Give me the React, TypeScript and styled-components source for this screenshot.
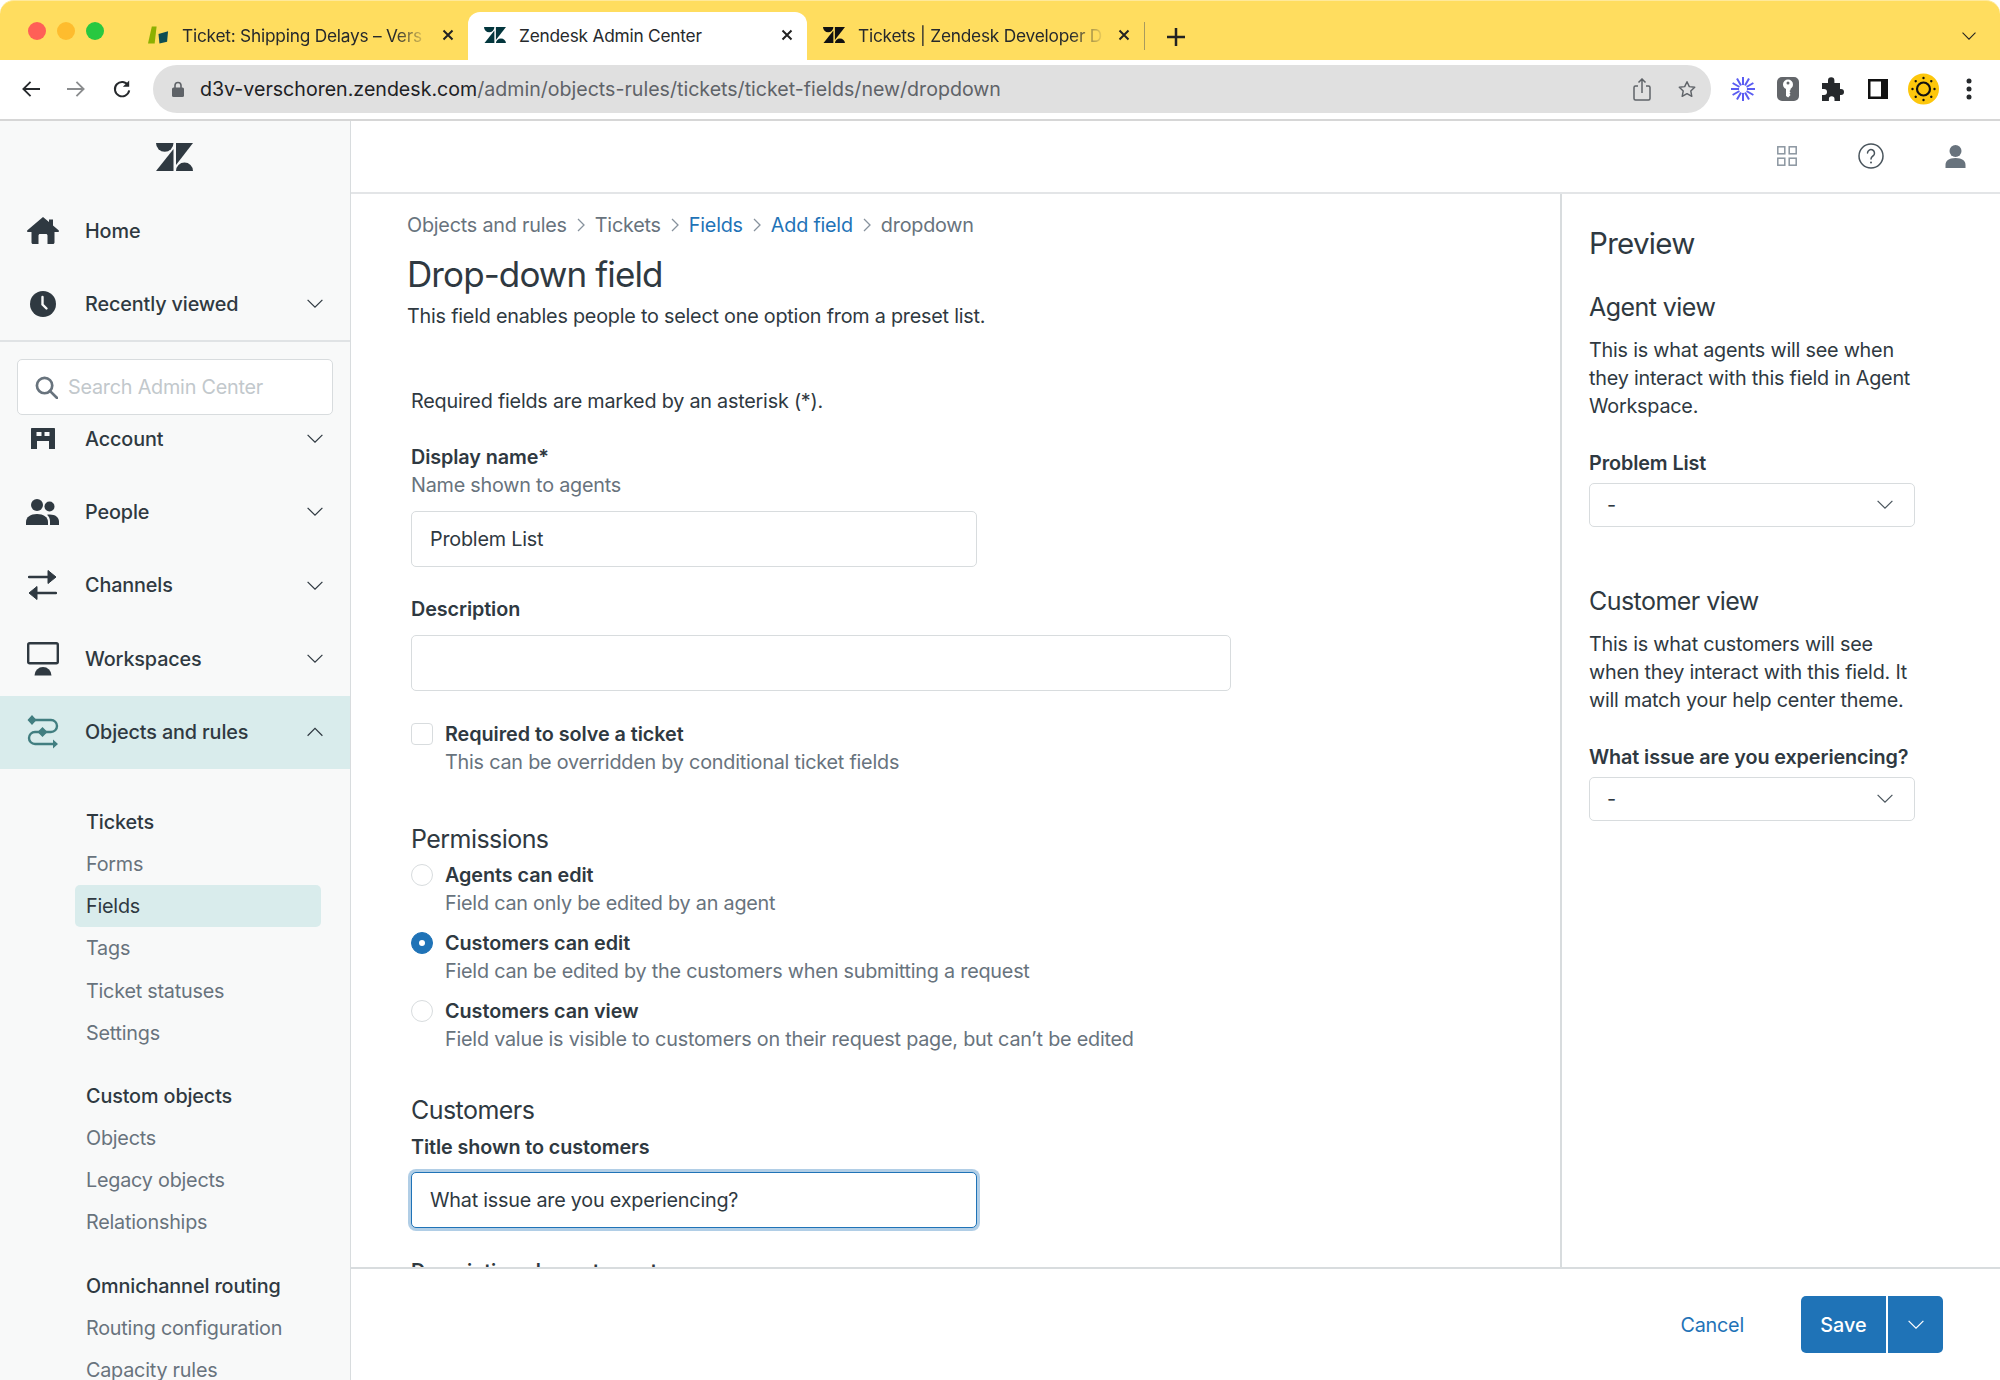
import styled, { createGlobalStyle } from "styled-components";

const GlobalStyle = createGlobalStyle`
  html, body {
    margin: 0;
    padding: 0;
    background: #fff;
  }
  * {
    box-sizing: border-box;
  }
  body {
    font-family: Inter, "Liberation Sans", sans-serif;
    letter-spacing: -0.22px;
    color: #2f3941;
  }
`;

const Page = styled.div`
  width: 2000px;
  height: 1380px;
  display: flex;
  flex-direction: column;
  overflow: hidden;
`;

/* browser chrome */

const TabStrip = styled.div`
  height: 60px;
  flex: none;
  display: flex;
  align-items: flex-end;
  background: #ffdd5f;
  border-top: 1px solid #ffe99a;
  border-radius: 14px 14px 0 0;
  padding-left: 28px;
`;

const TrafficLights = styled.div`
  display: flex;
  gap: 11px;
  width: 120px;
  height: 48px;
  padding-top: 10px;
  flex: none;
`;

const Light = styled.span<{ $color: string }>`
  width: 18px;
  height: 18px;
  border-radius: 50%;
  background: ${({ $color }) => $color};
`;

const Tab = styled.div<{ $active?: boolean; $width: number; $inset: number }>`
  width: ${({ $width }) => $width}px;
  height: 48px;
  flex: none;
  display: flex;
  align-items: center;
  padding: 0 14px 2px ${({ $inset }) => $inset}px;
  gap: 13px;
  border-radius: 12px 12px 0 0;
  background: ${({ $active }) => ($active ? "#fff" : "transparent")};
`;

const TabTitle = styled.span<{ $fade?: boolean }>`
  flex: 1;
  font-size: 17.3px;
  color: #26292c;
  white-space: nowrap;
  overflow: hidden;
  ${({ $fade }) =>
    $fade &&
    `mask-image: linear-gradient(to right, #000 86%, transparent 100%);`}
`;

const TabDivider = styled.span`
  width: 1px;
  height: 28px;
  background: #a89a5e;
  margin: 0 0 10px 0;
  flex: none;
`;

const NewTab = styled.span`
  margin: 0 auto 14px 22px;
  display: flex;
`;

const TabMenu = styled.span`
  margin: 0 24px 20px 0;
  display: flex;
`;

const Toolbar = styled.div`
  height: 61px;
  flex: none;
  display: flex;
  align-items: center;
  padding: 0 0 1px 22px;
  background: #fff;
  border-bottom: 2px solid #d6d6d6;
`;

const ToolButton = styled.span<{ $gap?: number }>`
  width: 18px;
  height: 24px;
  flex: none;
  display: flex;
  align-items: center;
  justify-content: center;
  margin-right: ${({ $gap }) => $gap ?? 0}px;
`;

const UrlBar = styled.div`
  width: 1558px;
  height: 48px;
  flex: none;
  display: flex;
  align-items: center;
  padding: 0 15px 0 19px;
  background: #e0e0e0;
  border-radius: 24px;
  margin-right: 9px;
`;

const UrlText = styled.div`
  flex: 1;
  margin-left: 16px;
  font-size: 19.6px;
  letter-spacing: 0;
  color: #5f6368;
  white-space: nowrap;
`;

const UrlHost = styled.span`
  color: #202124;
`;

const ExtensionTray = styled.div`
  display: flex;
  align-items: center;
`;

const Extension = styled.span`
  width: 45.2px;
  height: 32px;
  display: flex;
  align-items: center;
  justify-content: center;
`;

/* app shell */

const AppBody = styled.div`
  flex: 1;
  min-height: 0;
  display: flex;
`;

const Sidebar = styled.nav`
  width: 351px;
  flex: none;
  background: #f8f9f9;
  border-right: 1px solid #d8dcde;
  overflow: hidden;
`;

const LogoBox = styled.div`
  height: 73px;
  display: flex;
  justify-content: center;
  padding: 22px 2px 0 0;
`;

const NavRow = styled.div<{ $active?: boolean }>`
  height: 73.4px;
  display: flex;
  align-items: center;
  padding: 0 27px 0 24px;
  font-size: 19.8px;
  font-weight: 500;
  letter-spacing: -0.12px;
  color: #2f3941;
  background: ${({ $active }) => ($active ? "#d9ecec" : "transparent")};
`;

const NavIcon = styled.span`
  width: 37px;
  height: 37px;
  margin-right: 24px;
  flex: none;
  display: flex;
  align-items: center;
  justify-content: center;
`;

const NavLabel = styled.span`
  flex: 1;
`;

const PinnedNav = styled.div`
  border-bottom: 2px solid #e0e3e5;
  height: 148px;
`;

const SearchWrap = styled.div`
  position: relative;
  z-index: 1;
  height: 60px;
  padding: 17px 17px 0 17px;
`;

const SearchBox = styled.div`
  height: 56px;
  display: flex;
  align-items: center;
  padding-left: 17px;
  gap: 10px;
  background: #fff;
  border: 1.5px solid #d8dcde;
  border-radius: 5px;
`;

const SearchInput = styled.input`
  border: 0;
  outline: 0;
  padding: 0;
  background: transparent;
  width: 240px;
  font: 400 19.8px Inter, "Liberation Sans", sans-serif;
  letter-spacing: inherit;
  &::placeholder {
    color: #c2c8cc;
    opacity: 1;
  }
`;

const SubNav = styled.div`
  padding: 33px 29px 0 75px;
`;

const SubGroup = styled.div`
  margin-bottom: 22px;
`;

const SubHeading = styled.div`
  height: 41px;
  display: flex;
  align-items: center;
  padding-left: 11px;
  font-size: 19.8px;
  font-weight: 500;
  letter-spacing: -0.12px;
  color: #2f3941;
`;

const SubItem = styled.div<{ $active?: boolean }>`
  height: 42.2px;
  display: flex;
  align-items: center;
  padding-left: 11px;
  font-size: 19.8px;
  border-radius: 5px;
  color: ${({ $active }) => ($active ? "#2f3941" : "#68737d")};
  background: ${({ $active }) => ($active ? "#d9ecec" : "transparent")};
`;

const Workspace = styled.div`
  flex: 1;
  min-width: 0;
  display: flex;
  flex-direction: column;
`;

const TopBar = styled.header`
  height: 73px;
  flex: none;
  display: flex;
  align-items: center;
  justify-content: flex-end;
  padding: 0 30px 1px 0;
  gap: 54px;
  border-bottom: 2px solid #e3e5e7;
`;

const TopIcon = styled.span`
  width: 30px;
  height: 30px;
  display: flex;
  align-items: center;
  justify-content: center;
`;

const Columns = styled.div`
  flex: 1;
  min-height: 0;
  display: flex;
`;

const FormColumn = styled.main`
  flex: 1;
  min-width: 0;
  overflow: hidden;
  padding: 17px 0 0 56px;
`;

const Breadcrumbs = styled.div`
  display: flex;
  align-items: center;
  gap: 10px;
  height: 28px;
  font-size: 19.8px;
  color: #68737d;
`;

const CrumbLink = styled.span`
  color: #1f73b7;
`;

const PageTitle = styled.h1`
  margin: 13px 0 0;
  font-size: 35px;
  line-height: 44px;
  font-weight: 400;
  letter-spacing: -0.9px;
`;

const Lead = styled.p`
  margin: 6px 0 0;
  font-size: 19.8px;
  line-height: 28px;
`;

const Form = styled.form`
  padding-left: 4px;
`;

const Note = styled.p`
  margin: 57px 0 0;
  font-size: 19.8px;
  line-height: 28px;
`;

const FieldLabel = styled.div<{ $top: number }>`
  margin-top: ${({ $top }) => $top}px;
  font-size: 19.8px;
  line-height: 28px;
  font-weight: 600;
  letter-spacing: -0.1px;
`;

const Hint = styled.div`
  font-size: 19.8px;
  line-height: 28px;
  color: #68737d;
  white-space: nowrap;
`;

const TextInput = styled.input<{ $width: number; $top?: number; $focused?: boolean }>`
  display: block;
  width: ${({ $width }) => $width}px;
  height: 56px;
  margin-top: ${({ $top }) => $top ?? 12}px;
  padding: 0 18px;
  border-radius: 5px;
  outline: 0;
  font: 400 19.8px Inter, "Liberation Sans", sans-serif;
  letter-spacing: inherit;
  color: #2f3941;
  background: #fff;
  border: ${({ $focused }) =>
    $focused ? "1.5px solid #1f73b7" : "1.5px solid #d8dcde"};
  box-shadow: ${({ $focused }) =>
    $focused ? "0 0 0 3px rgba(31, 115, 183, 0.35)" : "none"};
`;

const OptionRow = styled.div<{ $top: number }>`
  display: flex;
  gap: 12px;
  margin-top: ${({ $top }) => $top}px;
`;

const OptionBody = styled.div``;

const OptionTitle = styled.div`
  font-size: 19.8px;
  line-height: 28px;
  font-weight: 600;
  letter-spacing: -0.05px;
`;

const CheckMark = styled.span`
  width: 22px;
  height: 22px;
  margin-top: 3px;
  flex: none;
  background: #fff;
  border: 1.5px solid #d8dcde;
  border-radius: 4px;
`;

const RadioMark = styled.span<{ $checked?: boolean }>`
  width: 22px;
  height: 22px;
  margin-top: 3px;
  flex: none;
  display: flex;
  align-items: center;
  justify-content: center;
  border-radius: 50%;
  border: 1.5px solid ${({ $checked }) => ($checked ? "#1f73b7" : "#d8dcde")};
  background: ${({ $checked }) => ($checked ? "#1f73b7" : "#fff")};
  &::after {
    content: "";
    width: 6px;
    height: 6px;
    border-radius: 50%;
    background: ${({ $checked }) => ($checked ? "#fff" : "transparent")};
  }
`;

const SectionTitle = styled.h2<{ $top: number }>`
  margin: ${({ $top }) => $top}px 0 0;
  font-size: 25px;
  line-height: 32px;
  font-weight: 400;
  letter-spacing: -0.55px;
`;

const PreviewColumn = styled.aside`
  width: 440px;
  flex: none;
  border-left: 2px solid #d8dcde;
  padding: 27px 0 0 27px;
`;

const PreviewTitle = styled.h2`
  margin: 0;
  font-size: 29.5px;
  line-height: 44px;
  font-weight: 400;
  letter-spacing: -0.7px;
`;

const PreviewText = styled.p`
  margin: 13px 0 0;
  font-size: 19.8px;
  line-height: 28px;
  width: 336px;
`;

const SelectBox = styled.div`
  width: 326px;
  height: 44px;
  margin-top: 6px;
  display: flex;
  align-items: center;
  justify-content: space-between;
  padding: 0 21px 0 17px;
  font-size: 19.8px;
  background: #fff;
  border: 1.5px solid #d8dcde;
  border-radius: 5px;
`;

const Footer = styled.footer`
  height: 113px;
  flex: none;
  display: flex;
  align-items: center;
  justify-content: flex-end;
  padding: 0 57px 0 0;
  border-top: 2px solid #d8dcde;
`;

const CancelLink = styled.span`
  margin-right: 57px;
  font-size: 19.8px;
  color: #1f73b7;
`;

const SplitButton = styled.div`
  display: flex;
  height: 57px;
  border-radius: 5px;
  overflow: hidden;
  background: #1f73b7;
  color: #fff;
  font-size: 19.8px;
  font-weight: 500;
  letter-spacing: 0;
`;

const SaveSegment = styled.span`
  width: 87px;
  display: flex;
  align-items: center;
  justify-content: center;
  border-right: 2px solid #fff;
`;

const MenuSegment = styled.span`
  width: 55px;
  display: flex;
  align-items: center;
  justify-content: center;
`;

/* icons */

function ZendeskLogo({ size, color }: { size: number; color: string }) {
  return (
    <svg width={size} height={(size * 28) / 37} viewBox="0 0 37 28" fill={color}>
      <path d="M0 0H17.5A8.75 8.75 0 0 1 0 0Z" />
      <path d="M17.5 6V28H0Z" />
      <path d="M20 0H37L20 22Z" />
      <path d="M20 28A8.5 8.5 0 0 1 37 28Z" />
    </svg>
  );
}

function Chevron({ up, color = "#2f3941", size = 16 }: { up?: boolean; color?: string; size?: number }) {
  return (
    <svg width={size} height={size * 0.6} viewBox="0 0 16 9.6" fill="none" stroke={color} strokeWidth="1.2">
      <path d={up ? "M.6 8.8 8 1.4l7.4 7.4" : "M.6.8 8 8.2 15.4.8"} />
    </svg>
  );
}

function CloseGlyph() {
  return (
    <svg width="12" height="12" viewBox="0 0 12 12" stroke="#222" strokeWidth="2" style={{ flex: "none" }}>
      <path d="M1.5 1.5l9 9M10.5 1.5l-9 9" />
    </svg>
  );
}

function HomeIcon() {
  return (
    <svg width="32" height="27" viewBox="0 0 32 27" fill="#2f3941">
      <path d="M16 0 .4 13.2c-.7.7-.3 1.8.7 1.8H4.5v10.5c0 .8.7 1.5 1.5 1.5h5.5v-8.5c0-.8.7-1.5 1.5-1.5h6c.8 0 1.5.7 1.5 1.5V27H26c.8 0 1.5-.7 1.5-1.5V15h3.4c1 0 1.4-1.1.7-1.800L26 8.5V2.5h-4v2.6z" />
    </svg>
  );
}

function ClockIcon() {
  return (
    <svg width="26" height="26" viewBox="0 0 26 26">
      <circle cx="13" cy="13" r="13" fill="#2f3941" />
      <path d="M12.5 6v7.5l4 4" fill="none" stroke="#f8f9f9" strokeWidth="2.4" strokeLinecap="round" />
    </svg>
  );
}

function BuildingIcon() {
  return (
    <svg width="24" height="21" viewBox="0 0 24 21" fill="#2f3941">
      <path fillRule="evenodd" d="M1 0h22c.6 0 1 .4 1 1v20h-6v-8H6v8H0V1c0-.6.4-1 1-1zm4.500 4v4h5V4zm8 0v4h5V4z" />
    </svg>
  );
}

function PeopleIcon() {
  return (
    <svg width="33" height="26" viewBox="0 0 33 26" fill="#2f3941">
      <circle cx="11" cy="6" r="6" />
      <circle cx="23.5" cy="7.5" r="5" />
      <path d="M0 26v-3c0-5 4.5-8 11-8s11 3 11 8v3z" />
      <path d="M24 26v-3.500c0-2.500-.9-5-3-6.700.9-.2 1.800-.3 2.800-.3 5.500 0 9.200 2.800 9.200 7v3.500z" />
    </svg>
  );
}

function ChannelsIcon() {
  return (
    <svg width="29" height="32" viewBox="0 0 29 32" fill="#2f3941" stroke="#2f3941">
      <path d="M1 8h22M6 24h22" fill="none" strokeWidth="2.4" strokeLinecap="round" />
      <path d="M20 1.500 28 8l-8 6.500zM9 17.500 1 24l8 6.500z" strokeLinejoin="round" strokeWidth="1" />
    </svg>
  );
}

function MonitorIcon() {
  return (
    <svg width="32" height="34" viewBox="0 0 32 34">
      <rect x="1.2" y="1.2" width="29.6" height="20" rx="1.5" fill="none" stroke="#2f3941" strokeWidth="2.4" />
      <path d="M7.5 33.5a8.5 8.5 0 0 1 17 0z" fill="#2f3941" />
    </svg>
  );
}

function RulesIcon() {
  return (
    <svg width="32" height="34" viewBox="0 0 32 34" fill="none" stroke="#417e80" strokeWidth="2.4">
      <path d="M5 5h19a5.5 5.5 0 0 1 0 12H8a5.5 5.5 0 0 0 0 12h19" />
      <path d="M5 0 9.5 5 5 10 .5 5zM15.5 12l5 5-5 5-5-5zM26 24.500l5 4.500-5 4.500z" fill="#417e80" stroke="none" />
    </svg>
  );
}

function SearchIcon() {
  return (
    <svg width="23" height="23" viewBox="0 0 24 24" fill="none" stroke="#68737d" strokeWidth="2.8" style={{ flex: "none" }}>
      <circle cx="10" cy="10" r="8" />
      <path d="m15.5 15.5 7.5 7.5" strokeLinecap="round" />
    </svg>
  );
}

function GridIcon() {
  return (
    <svg width="20" height="20" viewBox="0 0 20 20" fill="none" stroke="#8b96a0" strokeWidth="1.5">
      <rect x=".8" y=".8" width="7" height="7" />
      <rect x="12.2" y=".8" width="7" height="7" />
      <rect x=".8" y="12.2" width="7" height="7" />
      <rect x="12.2" y="12.2" width="7" height="7" />
    </svg>
  );
}

function HelpIcon() {
  return (
    <svg width="26" height="26" viewBox="0 0 26 26" fill="none" stroke="#49545c" strokeWidth="1.5">
      <circle cx="13" cy="13" r="12" />
      <path d="M9.5 10a3.5 3.5 0 1 1 5.4 3c-1.2.8-1.9 1.5-1.9 3" strokeLinecap="round" />
      <circle cx="13" cy="19.5" r="1" fill="#49545c" stroke="none" />
    </svg>
  );
}

function PersonIcon() {
  return (
    <svg width="21" height="23" viewBox="0 0 21 23" fill="#68737d">
      <circle cx="10.5" cy="6" r="6" />
      <path d="M.5 23v-3c0-4 3-7 10-7s10 3 10 7v3z" />
    </svg>
  );
}

function CrumbArrow() {
  return (
    <svg width="8" height="14" viewBox="0 0 8 14" fill="none" stroke="#87929d" strokeWidth="1.3">
      <path d="m1 1 6 6-6 6" />
    </svg>
  );
}

function NavGlyph({ kind }: { kind: "back" | "forward" | "reload" }) {
  if (kind === "reload") {
    return (
      <svg width="21" height="23" viewBox="0 0 20 22" fill="none" stroke="#26292c" strokeWidth="2.2">
        <path d="M17 6.5A8 8 0 1 0 18 12" />
        <path d="M18 1v7h-7z" fill="#26292c" stroke="none" />
      </svg>
    );
  }
  return (
    <svg width="20" height="18" viewBox="0 0 20 18" fill="none" stroke={kind === "back" ? "#26292c" : "#8a8c8e"} strokeWidth="2">
      <path d={kind === "back" ? "M20 9H2M9.5 1 1.5 9l8 8" : "M0 9h18M10.5 1l8 8-8 8"} />
    </svg>
  );
}

function LockIcon() {
  return (
    <svg width="12" height="16" viewBox="0 0 12 16" style={{ flex: "none" }}>
      <path d="M3 7V4.500a3 3 0 0 1 6 0V7" fill="none" stroke="#5f6368" strokeWidth="1.6" />
      <rect y="6.5" width="12" height="9.5" rx="1.5" fill="#5f6368" />
    </svg>
  );
}

function ShareIcon() {
  return (
    <svg width="18" height="23" viewBox="0 0 18 23" fill="none" stroke="#5f6368" strokeWidth="1.5">
      <path d="M5 8H2.5C1.5 8 1 8.5 1 9.5v11c0 1 .5 1.5 1.5 1.5h13c1 0 1.5-.5 1.5-1.5v-11c0-1-.5-1.5-1.5-1.500H13M9 15V1M5.500 4.500 9 1l3.500 3.500" />
    </svg>
  );
}

function StarIcon() {
  return (
    <svg width="21" height="20" viewBox="0 0 21 20" fill="none" stroke="#5f6368" strokeWidth="1.7" strokeLinejoin="round">
      <path d="m10.5 1.5 2.7 5.7 6.3.8-4.6 4.3 1.2 6.2-5.6-3.100-5.600 3.100 1.200-6.200L1.500 8l6.300-.8z" />
    </svg>
  );
}

function BurstIcon() {
  const spokes = [0, 30, 60, 90, 120, 150];
  return (
    <svg width="24" height="24" viewBox="0 0 24 24" stroke="#5a5cf2" strokeWidth="2">
      {spokes.map((deg) => (
        <path key={deg} d="M12 0v24" transform={`rotate(${deg} 12 12)`} />
      ))}
      <circle cx="12" cy="12" r="4" fill="#fff" stroke="none" />
    </svg>
  );
}

function KeyIcon() {
  return (
    <svg width="22" height="24" viewBox="0 0 22 24">
      <rect width="22" height="24" rx="5" fill="#63666a" />
      <circle cx="11" cy="7.5" r="5" fill="#fff" />
      <path d="M9 10h4.500v3l-1 1 1 1.500-1 1 1 1.500-2.300 2.500L9 19z" fill="#fff" />
      <circle cx="11" cy="6" r="1.5" fill="#63666a" />
    </svg>
  );
}

function PuzzleIcon() {
  return (
    <svg width="22" height="24" viewBox="0 0 22 24" fill="#26292c">
      <path d="M0 6h6V3.500a3.200 3.200 0 0 1 6.400 0V6H18v6h1a3 3 0 0 1 0 6h-1v6h-5.500v-2a2.800 2.800 0 0 0-5.600 0v2H0v-6h2a3 3 0 0 0 0-6H0z" />
    </svg>
  );
}

function SidePanelIcon() {
  return (
    <svg width="20" height="20" viewBox="0 0 20 20">
      <path fillRule="evenodd" d="M0 0h20v20H0zm2.500 2.500v15H13v-15z" fill="#111" />
    </svg>
  );
}

function SunBadge() {
  const dots = [0, 45, 90, 135, 180, 225, 270, 315];
  return (
    <svg width="31" height="32" viewBox="0 0 31 32">
      <circle cx="15.5" cy="16" r="15.5" fill="#fdc70c" />
      <circle cx="15.5" cy="16" r="6.5" fill="none" stroke="#111" strokeWidth="2.2" />
      {dots.map((deg) => (
        <circle key={deg} cx="15.5" cy="5" r="1.2" fill="#111" transform={`rotate(${deg} 15.5 16)`} />
      ))}
    </svg>
  );
}

function DotsIcon() {
  return (
    <svg width="6" height="22" viewBox="0 0 6 22" fill="#26292c">
      <circle cx="3" cy="3" r="2.5" />
      <circle cx="3" cy="11" r="2.5" />
      <circle cx="3" cy="19" r="2.5" />
    </svg>
  );
}

function StoreFavicon() {
  return (
    <svg width="21" height="18" viewBox="0 0 22 18" style={{ flex: "none" }}>
      <path d="M4 0h5L7 18H0z" fill="#8cb000" />
      <path d="M11 8l10-3-1 11-8 2z" fill="#0f4d52" />
    </svg>
  );
}

const mainNav = [
  { label: "Account", icon: <BuildingIcon /> },
  { label: "People", icon: <PeopleIcon /> },
  { label: "Channels", icon: <ChannelsIcon /> },
  { label: "Workspaces", icon: <MonitorIcon /> },
];

const subNav = [
  {
    heading: "Tickets",
    items: ["Forms", "Fields", "Tags", "Ticket statuses", "Settings"],
  },
  {
    heading: "Custom objects",
    items: ["Objects", "Legacy objects", "Relationships"],
  },
  {
    heading: "Omnichannel routing",
    items: ["Routing configuration", "Capacity rules"],
  },
];

const permissions = [
  {
    title: "Agents can edit",
    hint: "Field can only be edited by an agent",
    top: 6,
  },
  {
    title: "Customers can edit",
    hint: "Field can be edited by the customers when submitting a request",
    top: 12,
    checked: true,
  },
  {
    title: "Customers can view",
    hint: "Field value is visible to customers on their request page, but can’t be edited",
    top: 12,
  },
];

export default function App() {
  return (
    <Page>
      <GlobalStyle />
      <TabStrip>
        <TrafficLights>
          <Light $color="#ff5f57" />
          <Light $color="#febc2e" />
          <Light $color="#28c840" />
        </TrafficLights>
        <Tab $width={320} $inset={0}>
          <StoreFavicon />
          <TabTitle $fade>Ticket: Shipping Delays – Vers</TabTitle>
          <CloseGlyph />
        </Tab>
        <Tab $active $width={339} $inset={16}>
          <ZendeskLogo size={22} color="#03363d" />
          <TabTitle>Zendesk Admin Center</TabTitle>
          <CloseGlyph />
        </Tab>
        <Tab $width={337} $inset={16}>
          <ZendeskLogo size={22} color="#111" />
          <TabTitle $fade>Tickets | Zendesk Developer D</TabTitle>
          <CloseGlyph />
        </Tab>
        <TabDivider />
        <NewTab>
          <svg width="18" height="18" viewBox="0 0 18 18" stroke="#222" strokeWidth="2.5">
            <path d="M9 0v18M0 9h18" />
          </svg>
        </NewTab>
        <TabMenu>
          <Chevron color="#222" size={14} />
        </TabMenu>
      </TabStrip>

      <Toolbar>
        <ToolButton $gap={27}>
          <NavGlyph kind="back" />
        </ToolButton>
        <ToolButton $gap={28}>
          <NavGlyph kind="forward" />
        </ToolButton>
        <ToolButton $gap={22}>
          <NavGlyph kind="reload" />
        </ToolButton>
        <UrlBar>
          <LockIcon />
          <UrlText>
            <UrlHost>d3v-verschoren.zendesk.com</UrlHost>
            /admin/objects-rules/tickets/ticket-fields/new/dropdown
          </UrlText>
          <ToolButton $gap={27}>
            <ShareIcon />
          </ToolButton>
          <ToolButton>
            <StarIcon />
          </ToolButton>
        </UrlBar>
        <ExtensionTray>
          <Extension>
            <BurstIcon />
          </Extension>
          <Extension>
            <KeyIcon />
          </Extension>
          <Extension>
            <PuzzleIcon />
          </Extension>
          <Extension>
            <SidePanelIcon />
          </Extension>
          <Extension>
            <SunBadge />
          </Extension>
          <Extension>
            <DotsIcon />
          </Extension>
        </ExtensionTray>
      </Toolbar>

      <AppBody>
        <Sidebar>
          <LogoBox>
            <ZendeskLogo size={37} color="#2f3941" />
          </LogoBox>
          <PinnedNav>
            <NavRow>
              <NavIcon>
                <HomeIcon />
              </NavIcon>
              <NavLabel>Home</NavLabel>
            </NavRow>
            <NavRow>
              <NavIcon>
                <ClockIcon />
              </NavIcon>
              <NavLabel>Recently viewed</NavLabel>
              <Chevron />
            </NavRow>
          </PinnedNav>
          <SearchWrap>
            <SearchBox>
              <SearchIcon />
              <SearchInput placeholder="Search Admin Center" readOnly />
            </SearchBox>
          </SearchWrap>
          {mainNav.map((row) => (
            <NavRow key={row.label}>
              <NavIcon>{row.icon}</NavIcon>
              <NavLabel>{row.label}</NavLabel>
              <Chevron />
            </NavRow>
          ))}
          <NavRow $active>
            <NavIcon>
              <RulesIcon />
            </NavIcon>
            <NavLabel>Objects and rules</NavLabel>
            <Chevron up />
          </NavRow>
          <SubNav>
            {subNav.map((group) => (
              <SubGroup key={group.heading}>
                <SubHeading>{group.heading}</SubHeading>
                {group.items.map((item) => (
                  <SubItem key={item} $active={item === "Fields"}>
                    {item}
                  </SubItem>
                ))}
              </SubGroup>
            ))}
          </SubNav>
        </Sidebar>

        <Workspace>
          <TopBar>
            <TopIcon>
              <GridIcon />
            </TopIcon>
            <TopIcon>
              <HelpIcon />
            </TopIcon>
            <TopIcon>
              <PersonIcon />
            </TopIcon>
          </TopBar>
          <Columns>
            <FormColumn>
              <Breadcrumbs>
                <span>Objects and rules</span>
                <CrumbArrow />
                <span>Tickets</span>
                <CrumbArrow />
                <CrumbLink>Fields</CrumbLink>
                <CrumbArrow />
                <CrumbLink>Add field</CrumbLink>
                <CrumbArrow />
                <span>dropdown</span>
              </Breadcrumbs>
              <PageTitle>Drop-down field</PageTitle>
              <Lead>This field enables people to select one option from a preset list.</Lead>
              <Form>
                <Note>Required fields are marked by an asterisk (*).</Note>
                <FieldLabel $top={28}>Display name*</FieldLabel>
                <Hint>Name shown to agents</Hint>
                <TextInput $width={566} value="Problem List" readOnly />
                <FieldLabel $top={28}>Description</FieldLabel>
                <TextInput $width={820} readOnly />
                <OptionRow $top={29}>
                  <CheckMark />
                  <OptionBody>
                    <OptionTitle>Required to solve a ticket</OptionTitle>
                    <Hint>This can be overridden by conditional ticket fields</Hint>
                  </OptionBody>
                </OptionRow>
                <SectionTitle $top={47}>Permissions</SectionTitle>
                {permissions.map((option) => (
                  <OptionRow key={option.title} $top={option.top}>
                    <RadioMark $checked={option.checked} />
                    <OptionBody>
                      <OptionTitle>{option.title}</OptionTitle>
                      <Hint>{option.hint}</Hint>
                    </OptionBody>
                  </OptionRow>
                ))}
                <SectionTitle $top={41}>Customers</SectionTitle>
                <FieldLabel $top={7}>Title shown to customers</FieldLabel>
                <TextInput $width={566} $top={11} $focused value="What issue are you experiencing?" readOnly />
                <FieldLabel $top={29}>Description shown to customers</FieldLabel>
              </Form>
            </FormColumn>

            <PreviewColumn>
              <PreviewTitle>Preview</PreviewTitle>
              <SectionTitle $top={26}>Agent view</SectionTitle>
              <PreviewText>
                This is what agents will see when they interact with this field in Agent Workspace.
              </PreviewText>
              <FieldLabel $top={29}>Problem List</FieldLabel>
              <SelectBox>
                -
                <Chevron color="#49545c" />
              </SelectBox>
              <SectionTitle $top={58}>Customer view</SectionTitle>
              <PreviewText>
                This is what customers will see when they interact with this field. It will match your help center theme.
              </PreviewText>
              <FieldLabel $top={29}>What issue are you experiencing?</FieldLabel>
              <SelectBox>
                -
                <Chevron color="#49545c" />
              </SelectBox>
            </PreviewColumn>
          </Columns>
          <Footer>
            <CancelLink>Cancel</CancelLink>
            <SplitButton>
              <SaveSegment>Save</SaveSegment>
              <MenuSegment>
                <Chevron color="#fff" />
              </MenuSegment>
            </SplitButton>
          </Footer>
        </Workspace>
      </AppBody>
    </Page>
  );
}
